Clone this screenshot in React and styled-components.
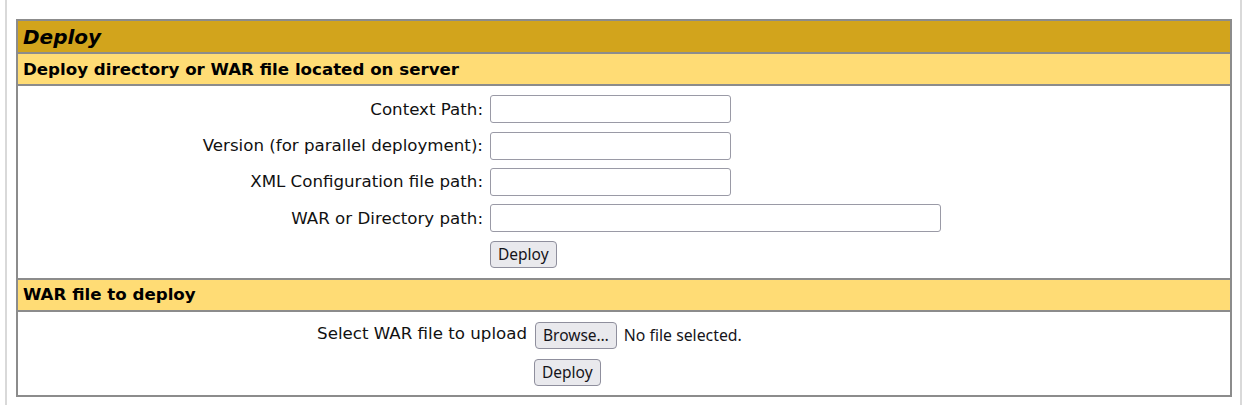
import React from "react";
import styled, { createGlobalStyle } from "styled-components";

const GlobalStyle = createGlobalStyle`
  html, body {
    margin: 0;
    padding: 0;
    background: #fff;
  }
  body {
    font-family: "DejaVu Sans", Verdana, sans-serif;
    color: #000;
  }
`;

const deployFields = [
  { label: "Context Path:", size: "short" },
  { label: "Version (for parallel deployment):", size: "short" },
  { label: "XML Configuration file path:", size: "short" },
  { label: "WAR or Directory path:", size: "long" },
];

const App = () => {
  return (
    <>
      <GlobalStyle />
      <Frame>
        <Panel>
          <TitleRow>Deploy</TitleRow>
          <HeaderRow>Deploy directory or WAR file located on server</HeaderRow>
          <BodyRow>
            <FormGrid $labelWidth={465} $rowHeight={36.4}>
              {deployFields.map((field) => (
                <React.Fragment key={field.label}>
                  <Label>{field.label}</Label>
                  <Field>
                    <TextInput $size={field.size} type="text" />
                  </Field>
                </React.Fragment>
              ))}
              <Label />
              <Field>
                <Button type="button">Deploy</Button>
              </Field>
            </FormGrid>
          </BodyRow>
          <HeaderRow>WAR file to deploy</HeaderRow>
          <BodyRow $last>
            <FormGrid $labelWidth={509} $rowHeight={37}>
              <Label $lift>Select WAR file to upload</Label>
              <Field>
                <FilePicker>
                  <Button type="button">Browse…</Button>
                  <FileStatus>No file selected.</FileStatus>
                </FilePicker>
              </Field>
              <Label />
              <Field>
                <Button type="button">Deploy</Button>
              </Field>
            </FormGrid>
          </BodyRow>
        </Panel>
      </Frame>
    </>
  );
};

export default App;

const Frame = styled.div`
  box-sizing: border-box;
  margin-left: 5px;
  width: 1237px;
  height: 405px;
  padding: 19px 8px 0 9px;
  border-left: 2px solid #d9d9d9;
  border-right: 2px solid #d9d9d9;
  overflow: hidden;
`;

const Panel = styled.div`
  display: flex;
  flex-direction: column;
  width: 1216px;
  box-sizing: border-box;
  border: 1px solid #8c8c8c;
`;

const Cell = styled.div`
  box-sizing: border-box;
  border: 1px solid #8c8c8c;
`;

const TitleRow = styled(Cell)`
  display: flex;
  align-items: center;
  height: 33px;
  padding: 0 5px;
  background-color: #d2a41c;
  font-size: 20px;
  font-weight: bold;
  font-style: italic;
`;

const HeaderRow = styled(Cell)`
  display: flex;
  align-items: center;
  height: 32px;
  padding: 0 5px;
  background-color: #ffdc75;
  font-size: 16.67px;
  font-weight: bold;
`;

const BodyRow = styled(Cell)`
  padding: ${({ $last }) => ($last ? "5px 0 4px" : "5px 0 5px")};
  background: #fff;
`;

const FormGrid = styled.div`
  display: grid;
  grid-template-columns: ${({ $labelWidth }) => `${$labelWidth}px auto`};
  grid-auto-rows: ${({ $rowHeight }) => `${$rowHeight}px`};
  column-gap: 7px;
  align-items: center;
`;

const Label = styled.div`
  text-align: right;
  font-size: 16.67px;
  color: #111;
  white-space: nowrap;
  ${({ $lift }) => $lift && "margin-top: -3px;"}
`;

const Field = styled.div`
  display: flex;
  align-items: center;
`;

const TextInput = styled.input`
  box-sizing: border-box;
  width: ${({ $size }) => ($size === "long" ? "451px" : "241px")};
  height: 28px;
  margin: 0;
  padding: 2px 4px;
  border: 1px solid #9a9aa6;
  border-radius: 3px;
  background: #fff;
  font-size: 16px;
`;

const Button = styled.button`
  box-sizing: border-box;
  height: 27px;
  margin: 0;
  padding: 0 7px;
  border: 1px solid #8f8f9d;
  border-radius: 4px;
  background-color: #e9e9ed;
  color: #15141a;
  font-family: "Noto Sans", "Open Sans", sans-serif;
  font-size: 15.5px;
  line-height: 25px;
`;

const FilePicker = styled.div`
  display: flex;
  align-items: center;
  gap: 7px;
  margin-left: 1px;
`;

const FileStatus = styled.span`
  font-family: "Noto Sans", "Open Sans", sans-serif;
  font-size: 15.8px;
  color: #15141a;
`;
